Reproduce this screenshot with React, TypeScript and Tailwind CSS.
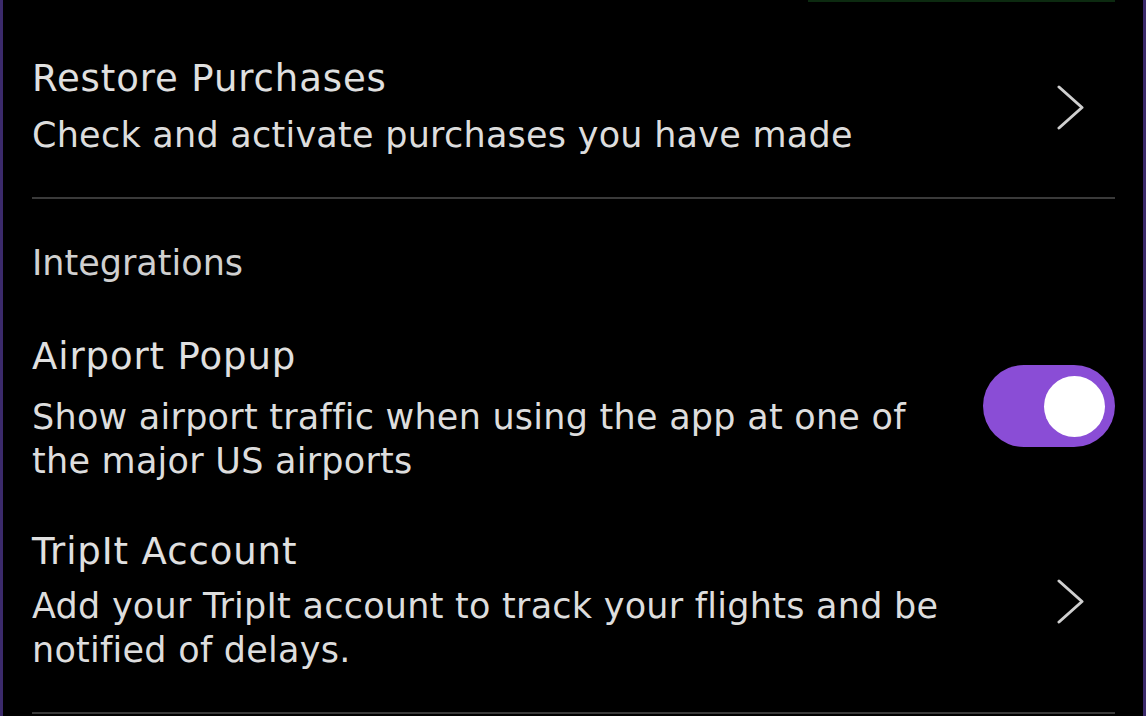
import React from 'react'

function Chevron() {
  return (
    <svg width="28" height="45" viewBox="0 0 28 45" className="shrink-0 mr-[31px]">
      <polyline points="3,2 26,22.5 3,43" fill="none" stroke="#cfcfcf" strokeWidth="3" strokeLinecap="round" strokeLinejoin="round" />
    </svg>
  )
}

function Toggle({ on }: { on: boolean }) {
  return (
    <div
      className={`w-[132px] h-[82px] rounded-full flex items-center px-[10px] shrink-0 self-start mt-[30px] ${
        on ? 'bg-[#8a4dd6] justify-end' : 'bg-[#444] justify-start'
      }`}
    >
      <div className="w-[61px] h-[61px] rounded-full bg-white" />
    </div>
  )
}

const titleCls = 'text-[37px] leading-[44px] tracking-[0.9px] text-[#e0e0e0]'
const descCls = 'text-[35px] leading-[44px] tracking-[0.25px] text-[#dddddd]'

export default function App() {
  return (
    <div
      className="w-[1146px] h-[716px] bg-black border-x-[3px] border-[#3b2a6b] overflow-hidden"
      style={{ fontFamily: '"DejaVu Sans", sans-serif' }}
    >
      <div className="ml-[805px] w-[307px] h-[2px] bg-[#0c2a10]" />
      <div className="pl-[29px] pr-[28px]">
        {/* Restore Purchases */}
        <div className="pt-[55px] pb-[40px] flex items-center justify-between">
          <div className="flex-1 pr-10">
            <div className={titleCls}>Restore Purchases</div>
            <div className={`${descCls} mt-[12px]`}>Check and activate purchases you have made</div>
          </div>
          <Chevron />
        </div>
        <div className="h-[2px] bg-[#3a3a3a]" />

        <div className="pt-[42px] text-[35px] leading-[44px] text-[#d0d0d0]">Integrations</div>

        {/* Airport Popup */}
        <div className="pt-[50px] flex justify-between">
          <div className="flex-1 pr-16">
            <div className={titleCls}>Airport Popup</div>
            <div className={`${descCls} mt-[16px]`}>
              Show airport traffic when using the app at one of the major US airports
            </div>
          </div>
          <Toggle on />
        </div>

        {/* TripIt */}
        <div className="pt-[47px] pb-[40px] flex items-center justify-between">
          <div className="flex-1 pr-10">
            <div className={titleCls}>TripIt Account</div>
            <div className={`${descCls} mt-[10px]`}>
              Add your TripIt account to track your flights and be notified of delays.
            </div>
          </div>
          <Chevron />
        </div>
        <div className="h-[2px] bg-[#3a3a3a]" />
      </div>
    </div>
  )
}
